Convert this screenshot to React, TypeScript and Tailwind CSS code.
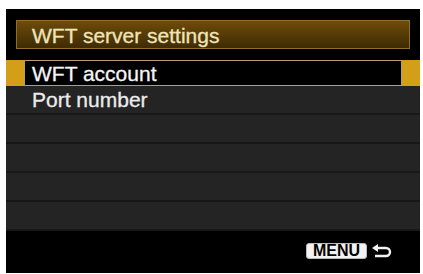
const rows = ['Port number', '', '', '', ''];

function ReturnIcon() {
  return (
    <svg width="21" height="14" viewBox="0 0 21 14" fill="none">
      <path d="M0 4 L6 0 L6 8 Z" fill="#f2f2f2" />
      <path d="M5 4 H14 A4 4 0 0 1 14 12 H3" stroke="#f2f2f2" strokeWidth="2.4" />
    </svg>
  );
}

export default function App() {
  return (
    <div className="w-[423px] h-[274px] bg-white pt-[9px] pl-[6px]">
      <div
        className="w-[414px] h-[264px] bg-black flex flex-col text-[21px] leading-none [-webkit-text-stroke:0.3px_currentColor]"
        style={{ fontFamily: '"Liberation Sans", Arial, sans-serif' }}
      >
        <div className="pt-[11px] px-[10px]">
          <div className="h-[29px] flex items-center pl-[15px] pt-[2px] border border-[#8f6d2c] bg-gradient-to-b from-[#6e4c0b] to-[#3f2b04] text-[#f1e4b9]">
            WFT server settings
          </div>
        </div>

        <div className="mt-[11px] h-[26px] bg-[#d39e18] px-[18px]">
          <div className="h-full flex items-center pl-[7px] bg-black border border-[#b99a70] text-[#f5f5f5]">
            WFT account
          </div>
        </div>

        <div className="flex flex-col">
          {rows.map((label, i) => (
            <div
              key={i}
              className="h-[29px] flex items-center pl-[26px] bg-[#242424] border-b-2 border-[#181818] text-[#ececec]"
            >
              {label}
            </div>
          ))}
        </div>

        <div className="flex-1 flex items-center justify-end pr-[27px] gap-[5px] pb-[2px]">
          <div className="h-[16px] w-[61px] rounded-[3px] bg-[#f2f2f2] border border-[#bbbbbb] flex items-center justify-center text-[16px] font-bold text-black [-webkit-text-stroke:0px]">
            MENU
          </div>
          <ReturnIcon />
        </div>
      </div>
    </div>
  );
}
